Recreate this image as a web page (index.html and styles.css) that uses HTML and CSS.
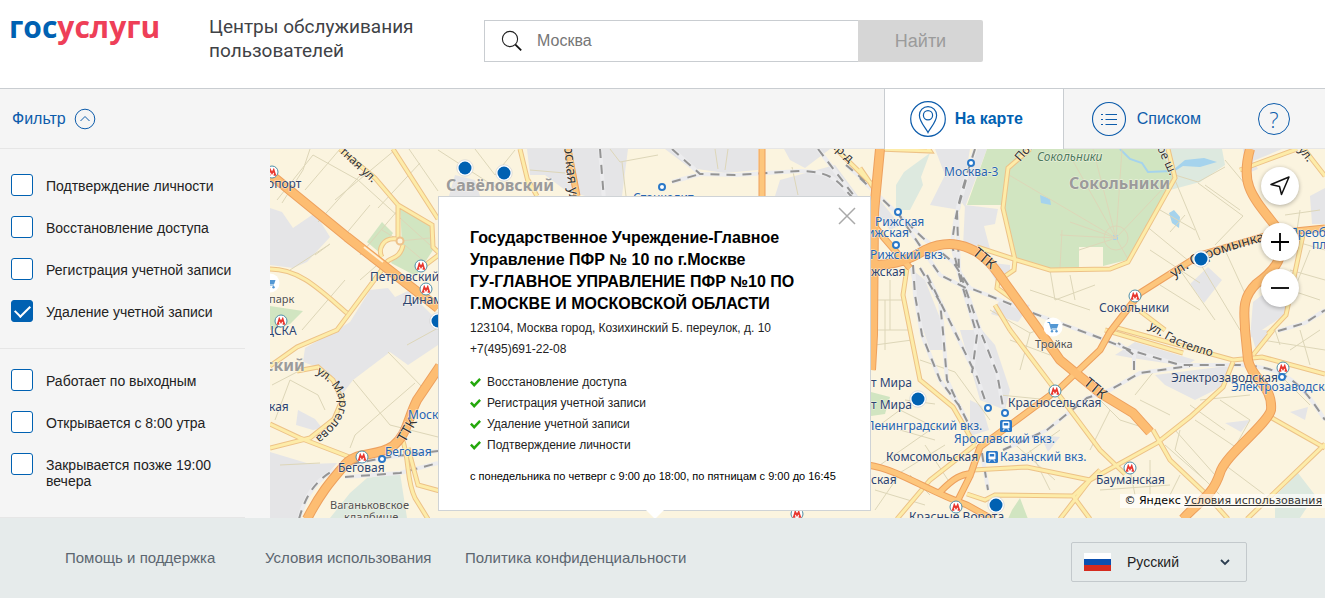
FILE: index.html
```html
<!DOCTYPE html>
<html lang="ru">
<head>
<meta charset="utf-8">
<title>Центры обслуживания пользователей</title>
<link rel="stylesheet" href="styles.css">
</head>
<body>
<header class="header">
  <a class="logo" href="#" aria-label="Госуслуги"><span class="logo-blue">гос</span><span class="logo-red">услугu</span></a>
  <h1 class="title">Центры обслуживания<br>пользователей</h1>
  <form class="search">
    <label class="search-field">
      <svg class="search-icon" viewBox="0 0 22 22" width="22" height="22"><circle cx="9" cy="9" r="7.6" fill="none" stroke="#222" stroke-width="1.1"/><path d="M14.4 14.6l5.8 5.8" stroke="#111" stroke-width="1.8"/></svg>
      <input type="text" aria-label="Город" placeholder="Москва">
    </label>
    <button class="search-button" type="button">Найти</button>
  </form>
</header>

<nav class="toolbar">
  <button class="filter-toggle" type="button">Фильтр
    <svg viewBox="0 0 22 22" width="22" height="22" fill="none" stroke="#0d5cab"><circle cx="11" cy="11" r="9.8"/><path d="M6.5 13l4.5-4.5 4.5 4.5"/></svg>
  </button>
  <div class="tabs">
    <button class="tab tab-active" type="button">
      <svg viewBox="0 0 36 36" width="36" height="36" fill="none" stroke="#0d5cab" stroke-width="1.2"><circle cx="18" cy="18" r="17.3"/><path d="M18 31.5C16 27 9.4 21 9.4 14.2a8.6 8.6 0 0 1 17.2 0C26.600 21 20 27 18 31.500z"/><circle cx="18" cy="14.200" r="4.600"/></svg>
      На карте
    </button>
    <button class="tab tab-list" type="button">
      <svg viewBox="0 0 36 36" width="36" height="36" fill="none" stroke="#0d5cab" stroke-width="1.1"><circle cx="18" cy="18" r="16.500"/><path d="M14.500 13.500h11.500M14.500 18.500h11.500M14.500 23.500h11.500M10 13.500h2M10 18.500h2M10 23.500h2"/></svg>
      Списком
    </button>
    <button class="help" type="button" aria-label="Помощь">?</button>
  </div>
</nav>

<main class="main">
  <form class="filters">
    <div class="group">
      <label class="option"><input type="checkbox"><span>Подтверждение личности</span></label>
      <label class="option"><input type="checkbox"><span>Восстановление доступа</span></label>
      <label class="option"><input type="checkbox"><span>Регистрация учетной записи</span></label>
      <label class="option"><input type="checkbox" checked><span>Удаление учетной записи</span></label>
    </div>
    <div class="group">
      <label class="option"><input type="checkbox"><span>Работает по выходным</span></label>
      <label class="option"><input type="checkbox"><span>Открывается с 8:00 утра</span></label>
      <label class="option"><input type="checkbox"><span>Закрывается позже 19:00 вечера</span></label>
    </div>
  </form>

  <section class="map">
    <svg class="map-canvas" viewBox="270 149 1055 369" preserveAspectRatio="xMinYMin slice">
      <defs>
        <g id="metro"><circle r="6" fill="#fff" stroke="#4f8fa8"/><path d="M-4.200 3h2.600M1.600 3h2.600M-3.200 3L-1.700-2 0 1.200 1.700-2 3.200 3" fill="none" stroke="#e8382f" stroke-width="1.700"/></g>
        <g id="stop"><circle r="3" fill="#fff" stroke="#2a78c8" stroke-width="2"/></g>
        <g id="pin"><circle r="8.200" fill="#fff" stroke="#c9c9c9" stroke-width=".6"/><circle r="6.500" fill="#0061b2"/></g>
        <g id="train"><rect x="-6" y="-6" width="12" height="12" rx="1.500" fill="#2a78c8"/><rect x="-3.500" y="-4.500" width="7" height="7" rx="1.200" fill="#fff"/><rect x="-2.200" y="-3" width="4.400" height="2.500" fill="#2a78c8"/><path d="M-3 4.800l1.300-2M3 4.800l-1.300-2" stroke="#fff"/></g>
        <g id="cart"><circle r="9.500" fill="#fff"/><path d="M-5.500-4.500h2l1.800 6.500h5.700" fill="none" stroke="#5397d4" stroke-width="1.200"/><path d="M-3-3h8.500l-1.300 4h-6z" fill="#5397d4"/><circle cx="-1" cy="4.300" r="1.200" fill="#5397d4"/><circle cx="3.500" cy="4.300" r="1.200" fill="#5397d4"/></g>
        <path id="orange" d="M270 174L347 237 438 308M307 519C320 494 330 482 343 467 355 450 375 458 393 446 407 435 407 420 417 400L440 366M880 149L874 212 873 335 871 370M868 266C900 264 910 259 925 250 947 240 962 244 977 252 989 260 996 270 1005 283L1046 340 1060 360 1100 393 1133 413 1150 432M1250 149C1240 185 1252 196 1277 228 1290 255 1273 272 1256 284 1240 300 1245 315 1245 330L1248 360C1252 380 1273 385 1271 410 1267 425 1225 455 1220 473 1212 497 1200 500 1183 519"/>
        <path id="orange-thin" d="M568 149L577 196M762 149V200M872 223L884 238 910 268M1325 228L1275 233 1200 255 1140 293 1110 332 1100 350 1060 388 1010 425 980 447 970 476 958 500M868 465C900 470 925 490 967 505L992 519M940 492C955 477 960 475 973 473"/>
        <path id="yellow" d="M340 149L375 178 398 205V237M398 205L432 225 433 247 440 254M393 149L438 219M397 239C382 237 378 250 382 257M403 245C400 260 389 257 386 263M440 254L420 269M270 269C300 269 320 290 347 313M384 267L337 330 297 347 270 366M297 371L318 367 333 380 342 400 334 419 310 438 270 448M270 424L300 438 352 458M402 438C410 460 406 480 415 498L428 519M408 448L418 485 440 491M520 149L530 190M537 196L528 180M836 149L878 190M860 168L875 190M878 149L930 151 928 148M1030 149L1008 168 1003 208 1015 260 1014 270 998 281 997 288 1021 305M977 247L1017 260 1050 270 1110 269 1128 262 1175 178 1168 149M907 268L903 295 910 330 920 380 953 407 975 445M1010 330L995 305M1010 330L1053 387 1100 450 1125 474M975 445L930 480 897 519M973 470L1027 467 1090 480M967 494L985 500 995 495 1073 496 1100 470M1073 496L1090 519M1060 519L1090 480 1157 443 1190 417 1223 387 1233 362M1105 330L1183 353M1117 328L1233 360 1262 357 1325 374M1140 311L1165 330M1153 430L1170 460 1205 493 1228 519M1272 418L1325 448M1325 444L1247 519M1304 149L1325 176M1240 170L1297 149M1304 230L1286 315 1268 334M1253 355L1273 330"/>
        <path id="rail" d="M975 149C965 180 955 210 952 245L960 278 977 335 972 373M966 180L957 212 959 270 980 330 997 373 1003 407M860 178L923 238 953 262 970 288 1030 312 1100 338 1130 350 1180 365 1235 365C1290 365 1305 390 1325 420M897 212L940 275 970 290M913 265L915 295 922 335 940 380 960 407 970 427M920 268L940 302 943 332 947 380 961 410M927 275L955 332 977 377 985 400M1003 450L1047 430 1087 398 1110 390 1140 373 1190 366M1134 370V355L1118 343M982 453L988 490M299 519C307 490 320 475 345 465L390 457 438 451M345 477L400 473 438 463M600 149L604 200M672 149L700 174 735 175 800 171C835 171 840 185 852 197M672 182L700 174M818 149L855 197M846 165L872 187M1278 331L1305 323 1325 310"/>
        <path id="stromynka" d="M1174 278C1205 255 1230 251 1290 234"/>
        <path id="margelova" d="M316 373C344 390 352 412 308 443"/>
        <path id="gastello" d="M1148 328C1166 341 1187 352 1220 358"/>
      </defs>
      <rect x="270" y="149" width="1055" height="369" fill="#fbf4df"/>
      <g class="grey-blocks">
        <path d="M270 208L282 212 293 228 315 213 330 237 307 262 293 268 270 265zM370 290L388 288 395 297 408 291 438 321 438 345 408 365 390 352 353 380 340 397 326 370 303 362 305 348 337 330 350 322zM270 452L310 464 337 463 304 502 299 518 270 518zM298 410L315 419 322 428 313 430 296 425z"/>
        <path d="M527 149H628L622 196H585L565 190 545 175H530zM455 175L475 180 480 196H449zM665 149H758V170L725 173 690 168zM775 196L780 180 835 165 858 196zM784 149H830L805 168 790 160z"/>
        <path d="M935 149H970L960 210 930 205 945 175zM965 205L998 209 995 224 984 226 990 249 963 247zM910 268L925 280 940 318 945 350 930 350 920 320zM960 330H982L995 345 1010 390 1005 410 980 400zM970 400L982 406 989 430 970 436zM880 200L900 225 890 230 876 212zM978 147L987 149 965 207 960 200zM985 262L1010 265 1010 275 997 283zM1000 300L1030 305 1018 322 991 314z"/>
        <path d="M1190 284L1208 267 1222 280 1204 303zM1253 302L1290 274 1289 312 1250 338zM1243 149H1282L1253 161 1258 169 1246 174zM1310 196L1325 188V224H1312zM1115 355L1135 342 1195 360 1185 366 1132 358zM1155 375L1235 365 1225 385 1195 400 1165 385zM1225 423L1250 420 1241 432zM1290 412L1308 407 1305 420zM1040 435L1060 437 1048 452zM1250 330L1270 330 1256 350z"/>
      </g>
      <path d="M400 205L432 225 433 250 416 276 391 263 402 246zM382 222L393 233 380 253 367 242zM270 306L303 311 290 324 270 330zM987 149L967 205 1003 205 1015 260 1050 270 1079 268V247H1103V266L1127 260 1147 225 1175 175 1160 149zM1012 510L1020 498 1028 519H1008zM871 392L890 397 885 414 871 416z" fill="#d1e5c1"/>
      <path d="M1160 149L1175 175 1170 190 1200 182 1225 165 1222 149zM896 185L904 172 930 153 921 177 923 185 910 210H896zM367 478L400 473 407 518H330L350 493zM1275 496L1298 473 1315 495 1300 518H1275z" fill="#dde9df"/>
      <path d="M1173 170L1185 160 1204 158 1217 162 1200 167 1183 166 1170 174zM1040 195L1050 199 1051 205 1041 203zM1169 213L1174 210 1180 217 1179 228 1172 223zM1113 235h5v5h-5z" fill="#a5d3ed"/>
      <path d="M1120 149L1130 159 1142 163 1148 172 1172 171" fill="none" stroke="#a5d3ed" stroke-width="2"/>
      <g class="minor">
        <path d="M310 149L303 170 282 203M277 200L313 155 358 180 430 245M335 200L395 150M318 222L365 170M305 190L340 149M360 255L398 210M378 208L420 163M330 244L315 255M345 235L370 205M290 270L330 244M302 330L345 280M360 280L383 260M400 241L430 238M400 241L425 262M400 241L382 230M409 149L438 191"/>
        <path d="M272 385L297 372M275 420L290 380 318 395M318 395L325 410M353 380L390 425 438 437M350 448L355 435 415 383M280 465L320 463M388 352L425 390 438 376M407 345L438 328M438 150L500 190M475 149L495 175 515 150M530 170L565 173M610 149L620 162 658 155M715 149L718 169M725 170L728 149M622 162L626 196M792 167L798 195"/>
        <path d="M877 330H908M875 345L912 340M885 300V350M877 300H902M890 280V330M920 360L955 372 990 420M905 400L935 404M900 430L935 440M873 430L900 410 940 430M880 465L930 430M893 477L945 445M875 490L925 505M875 510L897 478M910 475L930 495M925 445L948 480M990 310L1030 333 1020 370M1030 333L1060 322M1050 270L1055 300 1095 285M1030 290L1090 310M1070 275L1075 300M1010 340L1050 355M1000 395L1050 400M1010 440L1055 480M1025 455L1060 430M1030 450L1050 490"/>
        <path d="M1116 238L1009 175M1116 238L1068 152M1116 238L1093 149M1116 238L1122 149M1116 238L1171 180M1116 238L1060 235M1116 238L1079 250M1116 238L1129 261M1116 238L1070 222M1104 238a12 12 0 1 0 24 0a12 12 0 1 0-24 0M1062 230L1060 268"/>
        <path d="M1175 175L1198 182 1225 167M1175 180L1200 240M1198 183L1243 216 1215 245M1160 210L1195 230M1145 225L1190 262M1150 250L1200 283M1170 232L1185 215M1240 210L1205 185M1225 160L1250 190M1198 260L1240 330M1180 270L1215 320M1160 285L1200 310M1225 250L1248 300M1285 215L1320 210M1310 250L1290 300M1320 300L1290 290M1300 210L1297 230M1290 240L1325 250M1290 270L1325 280"/>
        <path d="M1100 400L1120 420 1145 428M1110 410L1090 450M1135 395L1155 370M1140 400L1170 415M1175 430L1215 475M1190 405L1225 430M1220 400L1250 420 1225 465 1265 495M1180 430L1175 450 1225 500M1195 420L1240 450M1200 400L1250 395M1165 445L1205 480M1100 490L1170 485M1130 470L1135 495M1150 460V495M1170 495L1180 475M1275 370L1310 405M1290 350L1320 330M1300 330L1310 365M1280 345L1275 330M1262 340L1325 350"/>
      </g>
      <use href="#rail" class="rail-base"/><use href="#rail" class="rail-dash"/>
      <use href="#yellow" class="yellow-edge"/><use href="#yellow" class="yellow-fill"/>
      <use href="#orange-thin" class="orange-thin-edge"/><use href="#orange" class="orange-edge"/>
      <use href="#orange-thin" class="orange-thin-fill"/><use href="#orange" class="orange-fill"/>
      <circle cx="400" cy="241" r="3.500" fill="#fbf4df" stroke="#eec28b" stroke-width="2"/>
      <path d="M364 247L383 262" stroke="#fff0d4" stroke-width="2"/>

      <g class="road-names">
        <text transform="translate(339 152) rotate(43)">тная ул.</text>
        <text class="big" transform="translate(564 146) rotate(84)">рская ул.</text>
        <text transform="translate(830 146) rotate(42)">пр-д</text>
        <text transform="translate(1020 162) rotate(-48)">Поперечный</text>
        <text transform="translate(1157 148) rotate(65)">ое ш.</text>
        <text transform="translate(1298 150) rotate(52)">ул.</text>
        <text class="big" transform="translate(972 254) rotate(40)">ТТК</text>
        <text class="big" transform="translate(1083 384) rotate(40)">ТТК</text>
        <text class="big" transform="translate(405 443) rotate(-60)">ТТК</text>
        <text class="big"><textPath href="#stromynka">ул. Стромынка</textPath></text>
        <text><textPath href="#margelova">ул. Маргелова</textPath></text>
        <text><textPath href="#gastello">ул. Гастелло</textPath></text>
      </g>
      <g class="district"><text x="446" y="191">Савёловский</text><text x="1069" y="189">Сокольники</text><text x="265" y="371">ский</text></g>
      <text class="park-name" x="1037" y="161">Сокольники</text>
      <g class="place">
        <text x="267" y="188">опорт</text><text x="370" y="281">Петровский</text><text x="403" y="304">Динамо</text><text x="265" y="335">ЦСКА</text><text x="269" y="411">кая</text><text x="338" y="472">Беговая</text>
        <text x="871" y="276">жская</text><text x="871" y="387">т Мира</text><text x="871" y="409">т Мира</text><text x="1008" y="407">Красносельская</text><text x="886" y="461">Комсомольская</text><text x="871" y="484">ская</text><text x="909" y="521">Красные Ворота</text><text x="1099" y="312">Сокольники</text><text x="1171" y="382">Электрозаводская</text><text x="1096" y="484">Бауманская</text>
      </g>
      <g class="note"><text x="269" y="303">парк</text><text x="1035" y="348">Тройка</text><text x="330" y="509">Ваганьковское</text><text x="344" y="521">кладбище</text></g>
      <g class="rail-name">
        <text x="633" y="202">Станколит</text><text x="944" y="176">Москва-3</text><text x="875" y="226">Рижская</text><text x="867" y="237">ижская</text><text x="870" y="259">Рижский вкз.</text><text x="408" y="419">Москва</text><text x="385" y="456">Беговая</text><text x="866" y="430">Ленинградский вкз.</text><text x="954" y="443">Ярославский вкз.</text><text x="1000" y="461">Казанский вкз.</text><text x="1231" y="391">Электрозаводская</text><text x="1289" y="237">Преобр</text><text x="1312" y="249">пл.</text>
      </g>
      <use href="#metro" x="272" y="172"/><use href="#metro" x="421" y="266"/><use href="#metro" x="426" y="289"/><use href="#metro" x="281" y="321"/><use href="#metro" x="362" y="457"/><use href="#metro" x="1055" y="391"/><use href="#metro" x="956" y="507"/><use href="#metro" x="1135" y="296"/><use href="#metro" x="1283" y="368"/><use href="#metro" x="1130" y="468"/><use href="#metro" x="797" y="514"/>
      <use href="#stop" x="971" y="163"/><use href="#stop" x="898" y="212"/><use href="#stop" x="896" y="245"/><use href="#stop" x="382" y="459"/><use href="#stop" x="662" y="187"/><use href="#stop" x="988" y="408"/><use href="#stop" x="1005" y="413"/><use href="#stop" x="1282" y="377"/>
      <use href="#train" x="1006" y="426"/><use href="#train" x="992" y="457"/>
      <use href="#cart" x="270" y="283"/><use href="#cart" x="1053" y="327"/>
      <use href="#pin" x="465" y="168"/><use href="#pin" x="504" y="173"/><use href="#pin" x="438" y="321"/><use href="#pin" x="918" y="399"/><use href="#pin" x="996" y="505"/><use href="#pin" x="1201" y="259"/>
    </svg>

    <article class="popup">
      <button class="close" type="button" aria-label="Закрыть"><svg viewBox="0 0 18 18" width="18" height="18"><path d="M1 1l16 16M17 1L1 17" stroke="#a9a9a9" stroke-width="1.500"/></svg></button>
      <h2>Государственное Учреждение-Главное Управление ПФР № 10 по г.Москве<br>ГУ-ГЛАВНОЕ УПРАВЛЕНИЕ ПФР №10 ПО Г.МОСКВЕ И МОСКОВСКОЙ ОБЛАСТИ</h2>
      <p>123104, Москва город, Козихинский Б. переулок, д. 10</p>
      <p>+7(495)691-22-08</p>
      <ul>
        <li>Восстановление доступа</li>
        <li>Регистрация учетной записи</li>
        <li>Удаление учетной записи</li>
        <li>Подтверждение личности</li>
      </ul>
      <p class="hours">с понедельника по четверг с 9:00 до 18:00, по пятницам с 9:00 до 16:45</p>
    </article>

    <div class="controls">
      <button class="locate" type="button" aria-label="Моё местоположение"><svg viewBox="0 0 20 20" width="20" height="20"><path d="M1 8.500L19 1 11.500 18.500 9.500 10.500z" fill="none" stroke="#111" stroke-width="1.500" stroke-linejoin="round"/></svg></button>
      <button type="button" aria-label="Приблизить"><svg viewBox="0 0 20 20" width="20" height="20"><path d="M1 10h18M10 1v18" stroke="#000" stroke-width="1.800"/></svg></button>
      <button type="button" aria-label="Отдалить"><svg viewBox="0 0 20 20" width="20" height="20"><path d="M1 10h18" stroke="#000" stroke-width="1.800"/></svg></button>
    </div>
    <div class="copyright">© Яндекс <a href="#">Условия использования</a></div>
  </section>
</main>

<footer class="footer">
  <nav class="footer-links">
    <a href="#">Помощь и поддержка</a>
    <a href="#">Условия использования</a>
    <a href="#">Политика конфиденциальности</a>
  </nav>
  <label class="language">
    <svg class="flag" viewBox="0 0 27 18" width="27" height="18"><path d="M0 0h27v6H0z" fill="#fff"/><path d="M0 6h27v6H0z" fill="#0b50b0"/><path d="M0 12h27v6H0z" fill="#d52b1e"/></svg>
    <select aria-label="Язык"><option>Русский</option></select>
    <svg class="arrow" viewBox="0 0 10 8" width="10" height="8"><path d="M1 2l4 4 4-4" fill="none" stroke="#2c3e50" stroke-width="1.800"/></svg>
  </label>
</footer>
</body>
</html>
```

FILE: styles.css
```css
* { box-sizing: border-box; }

body {
  margin: 0;
  min-height: 100vh;
  display: flex;
  flex-direction: column;
  font-family: "Liberation Sans", Arial, sans-serif;
  color: #222;
  background: #fff;
}

button, input, select { font-family: inherit; margin: 0; }
button { padding: 0; border: 0; background: none; cursor: pointer; }

.header {
  display: grid;
  grid-template-columns: 200px 275px minmax(0, 499px);
  height: 88px;
  padding: 10px 9px;
  align-items: start;
}

.logo {
  font: 700 30px/34px "Open Sans", sans-serif;
  text-decoration: none;
}
.logo-blue { color: #0061b2; }
.logo-red { color: #ee3f58; }

.title {
  margin: 5px 0 0;
  font: 400 19px/24px Roboto, sans-serif;
  color: #404246;
}

.search { display: flex; height: 42px; margin-top: 10px; }
.search-field {
  flex: 1;
  display: flex;
  align-items: center;
  gap: 14px;
  padding-left: 16px;
  border: 1px solid #c9cdd1;
  border-right: 0;
}
.search-field input {
  flex: 1;
  min-width: 0;
  border: 0;
  outline: 0;
  padding: 0;
  font-size: 16px;
  background: none;
}
.search-field input::placeholder { color: #767676; }
.search-button {
  width: 125px;
  background: #d6d6d6;
  color: #9b9b9b;
  font-size: 18px;
  border-radius: 0 2px 2px 0;
}

.toolbar {
  display: flex;
  justify-content: space-between;
  height: 61px;
  border-top: 1px solid #c9cdd1;
  border-bottom: 1px solid #e6e6e6;
  background: #f5f5f5;
}
.filter-toggle {
  display: flex;
  align-items: center;
  gap: 8px;
  padding-left: 12px;
  font-size: 16px;
  color: #0d5cab;
}
.tabs { display: flex; align-items: center; margin-bottom: -1px; }
.tab {
  display: flex;
  align-items: center;
  align-self: stretch;
  gap: 9px;
  font-size: 16px;
  color: #0d5cab;
}
.tab-active {
  width: 180px;
  padding-left: 25px;
  border: solid #c9cdd1;
  border-width: 0 1px;
  background: #fff;
  font-weight: 700;
  color: #0061b2;
}
.tab-list { padding-left: 27px; gap: 10px; }
.help {
  width: 32px;
  height: 32px;
  margin: 0 35px 0 57px;
  border: 1px solid #0d5cab;
  border-radius: 50%;
  font: 300 22px/30px "Open Sans", sans-serif;
  color: #0d5cab;
}

.main { display: grid; grid-template-columns: 270px minmax(0, 1fr); flex: 1; }

.filters { background: #f5f5f5; }
.group {
  display: grid;
  gap: 20px;
  width: 245px;
  padding: 25px 0 26px 11px;
  border-bottom: 1px solid #e6e6e6;
}
.group + .group { padding: 20px 0 28px 11px; }
.option { display: flex; align-items: flex-start; gap: 13px; font-size: 14px; line-height: 16px; }
.option span { padding-top: 4px; }
.option input {
  appearance: none;
  flex: none;
  width: 22px;
  height: 22px;
  border: 1px solid #0061b2;
  border-radius: 3px;
  background: #fff;
}
.option input:checked {
  display: grid;
  place-items: center;
  background: #0061b2;
}
.option input:checked::after {
  content: "";
  width: 13px;
  height: 7px;
  border: solid #fff;
  border-width: 0 0 2px 2px;
  transform: translateY(-2px) rotate(-45deg);
}

.map { position: relative; overflow: hidden; background: #fbf4df; }
.map-canvas { position: absolute; inset: 0; width: 100%; height: 100%; font-family: "Noto Sans", sans-serif; font-size: 12px; }
.map-canvas text { paint-order: stroke; stroke: #fffaf0; stroke-width: 1px; stroke-opacity: .7; }
.grey-blocks { fill: #e5e5e7; }
.minor { fill: none; stroke: #ddd6b8; stroke-width: 1; }
.rail-base { fill: none; stroke: #ececee; stroke-width: 4; }
.rail-dash { fill: none; stroke: #949494; stroke-width: 2; stroke-dasharray: 9 7; }
.yellow-edge { fill: none; stroke: #edc287; stroke-width: 5; }
.yellow-fill { fill: none; stroke: #fdeca9; stroke-width: 3; }
.orange-edge { fill: none; stroke: #eda05e; stroke-width: 10; stroke-linejoin: round; }
.orange-fill { fill: none; stroke: #fdbd72; stroke-width: 8; stroke-linejoin: round; }
.orange-thin-edge { fill: none; stroke: #eda05e; stroke-width: 7; stroke-linejoin: round; }
.orange-thin-fill { fill: none; stroke: #fdc67c; stroke-width: 5; stroke-linejoin: round; }
.road-names { fill: #333; }
.road-names .big { font-size: 14px; }
.district { fill: #9b9b9b; font-weight: 700; font-size: 16px; }
.park-name { fill: #4c7a5c; font-style: italic; }
.place { fill: #2c4470; }
.note { fill: #505050; font-size: 11px; }
.rail-name { fill: #2563b0; }

.popup {
  position: absolute;
  top: 47px;
  left: 168px;
  width: 433px;
  padding: 30px 31px 23px;
  border: 1px solid #cfd3d6;
  background: #fff;
  color: #222;
  font-size: 12px;
  line-height: 21px;
}
.popup::after {
  content: "";
  position: absolute;
  top: 100%;
  left: 50%;
  border: 9px solid transparent;
  border-top-color: #fff;
  transform: translateX(-50%);
}
.popup h2 { margin: 0 30px 3px 0; font-size: 16px; line-height: 22px; color: #000; }
.popup p { margin: 0; }
.popup ul { list-style: none; margin: 12px 0 10px; padding: 0; }
.popup li { display: flex; align-items: center; gap: 6px; }
.popup li::before {
  content: "";
  width: 11px;
  height: 9px;
  background: #24a80c;
  clip-path: polygon(0 50%, 16% 30%, 38% 58%, 84% 0, 100% 20%, 38% 100%);
}
.popup .hours { font-size: 11px; color: #000; }
.close { position: absolute; top: 10px; right: 14px; line-height: 0; }

.controls {
  position: absolute;
  top: 18px;
  right: 26px;
  display: grid;
  gap: 8px;
}
.controls button {
  display: grid;
  place-items: center;
  width: 38px;
  height: 38px;
  border-radius: 50%;
  background: #fff;
  box-shadow: 0 1px 4px rgba(0, 0, 0, .3);
}
.controls .locate { margin-bottom: 10px; }

.copyright {
  position: absolute;
  right: 0;
  bottom: 10px;
  padding: 0 3px 0 4px;
  background: rgba(255, 255, 255, .65);
  font: 11px/14px "DejaVu Sans", sans-serif;
  color: #000;
}
.copyright a { color: #333; }

.footer {
  display: flex;
  justify-content: space-between;
  align-items: flex-start;
  padding: 24px 78px 16px 65px;
  background: #e6ebeb;
}
.footer-links { display: grid; grid-template-columns: 200px 200px auto; padding-top: 7px; }
.footer-links a { font-size: 15px; line-height: 18px; color: #5c6670; text-decoration: none; }

.language {
  display: grid;
  grid-template-columns: 12px 27px 1fr 10px 16px;
  align-items: center;
  width: 176px;
  height: 40px;
  border: 1px solid #c3c9cc;
  border-radius: 2px;
}
.language select {
  grid-area: 1 / 1 / 2 / -1;
  height: 100%;
  padding: 0 0 0 55px;
  border: 0;
  appearance: none;
  background: none;
  font-size: 14px;
  color: #222;
}
.flag { grid-area: 1 / 2; }
.arrow { grid-area: 1 / 4; }
```
